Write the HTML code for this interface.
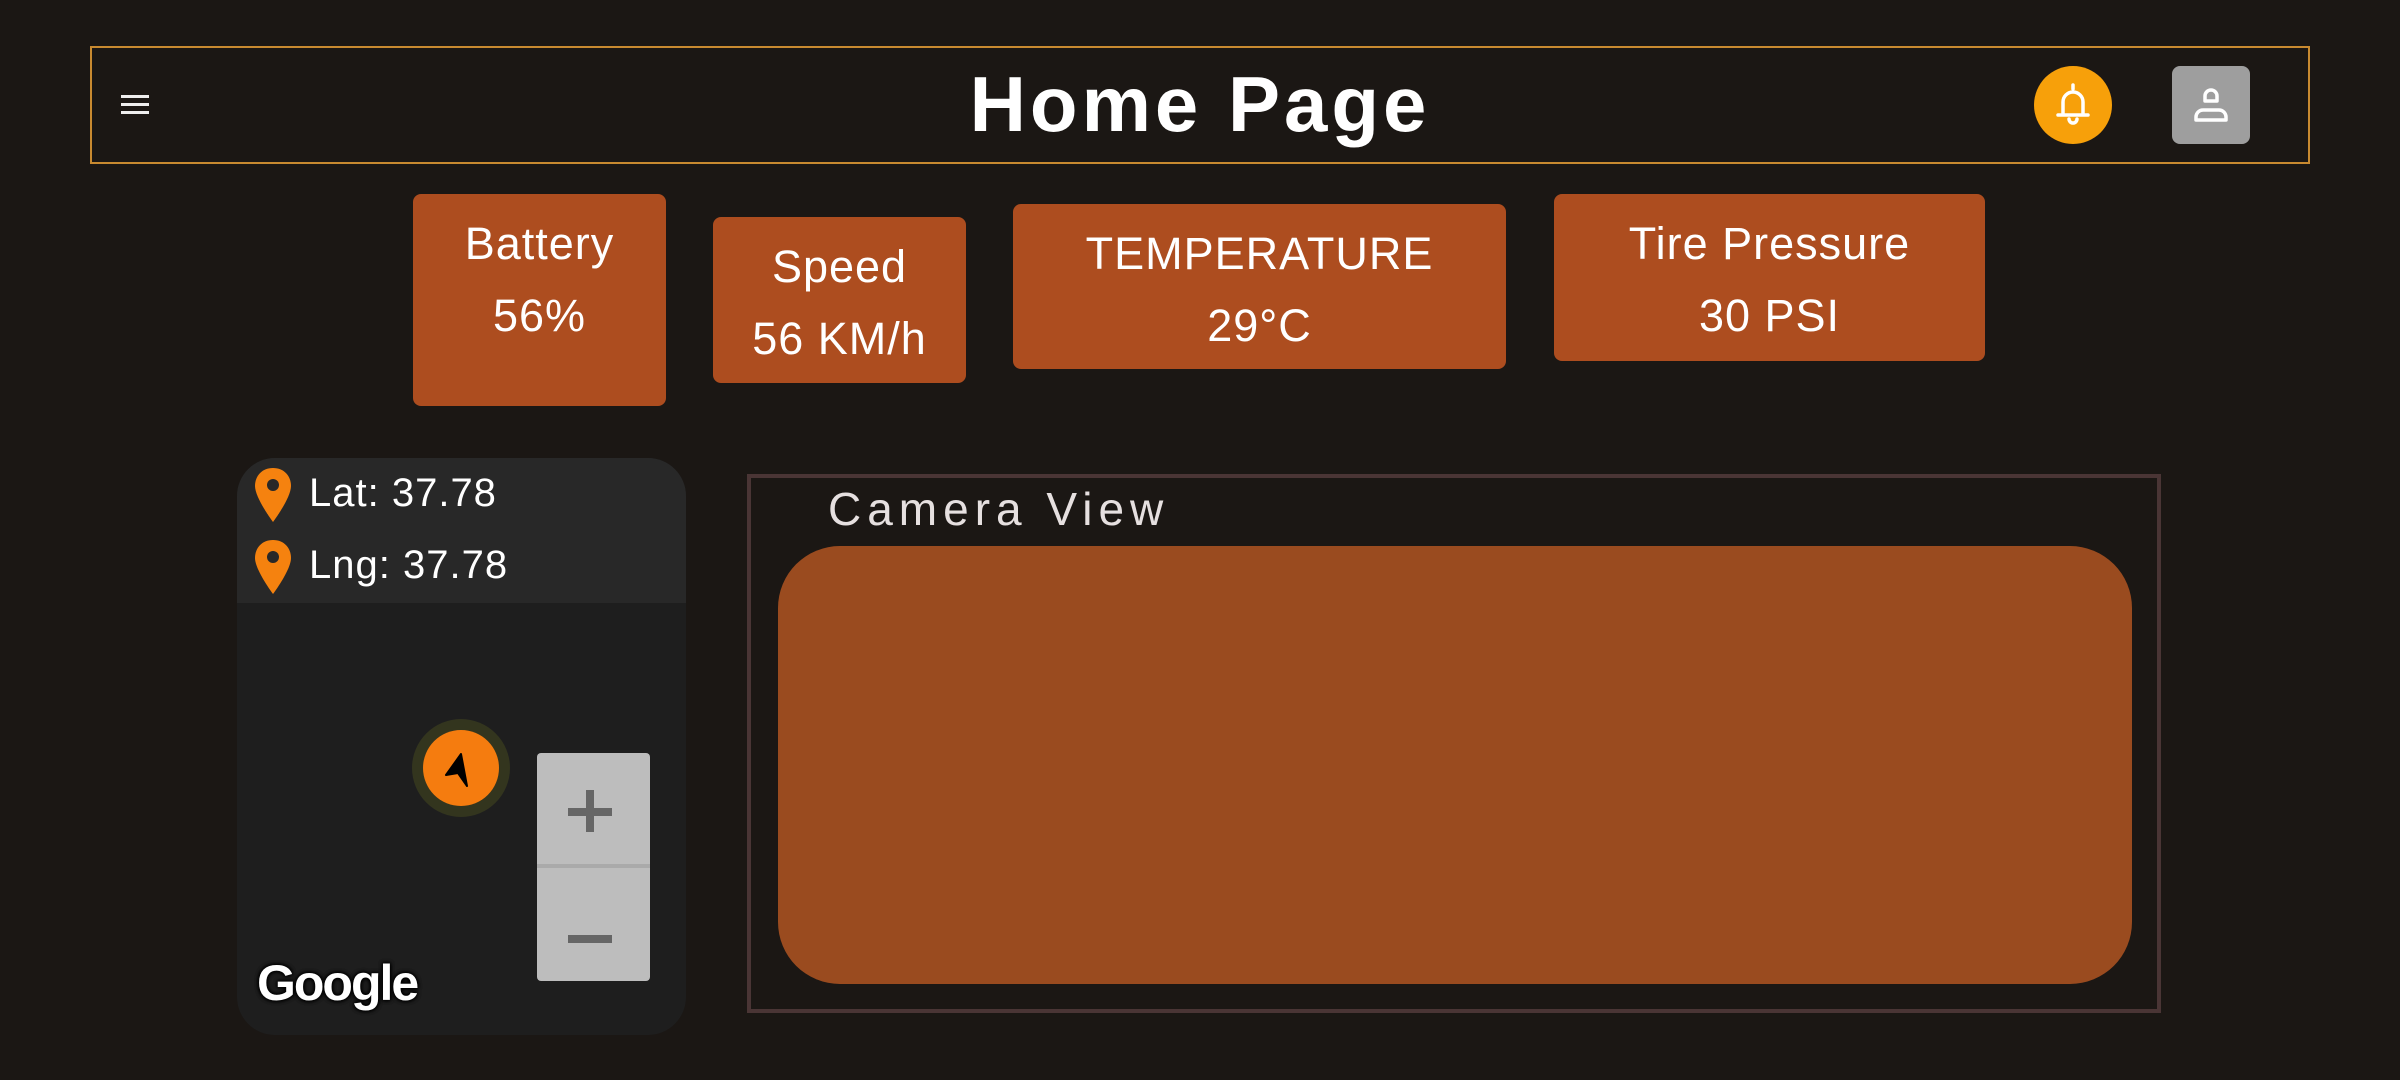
<!DOCTYPE html>
<html><head><meta charset="utf-8"><style>
*{margin:0;padding:0;box-sizing:border-box}
body{width:2400px;height:1080px;background:#1b1714;position:relative;overflow:hidden;font-family:"Liberation Sans",sans-serif;color:#fff}
.abs{position:absolute}
.hdr{left:90px;top:46px;width:2220px;height:118px;border:2px solid #c88a30}
.title{left:0;width:2400px;top:58px;text-align:center;font-weight:bold;font-size:78px;line-height:92px;letter-spacing:4px}
.card{background:#ad4d1f;border-radius:8px;text-align:center;font-size:45px;line-height:72px;padding-top:14px;letter-spacing:1px}
.map{left:237px;top:458px;width:449px;height:577px;border-radius:38px;background:#1e1e1e;overflow:hidden}
.maphead{left:0;top:0;width:449px;height:145px;background:#282828}
.ll{font-size:40px;left:72px;letter-spacing:1px}
.cam{left:747px;top:474px;width:1414px;height:539px;border:4px solid #4a3535}
</style></head><body>
<div class="abs hdr"></div>
<div class="abs" style="left:121px;top:95px;width:28px;height:3px;background:#eee"></div>
<div class="abs" style="left:121px;top:103px;width:28px;height:3px;background:#eee"></div>
<div class="abs" style="left:121px;top:111px;width:28px;height:3px;background:#eee"></div>
<div class="abs title">Home Page</div>
<div class="abs" style="left:2034px;top:66px;width:78px;height:78px;border-radius:50%;background:#f7a00a"></div>
<svg class="abs" style="left:2053px;top:82px" width="40" height="46" viewBox="0 0 40 46"><path d="M20 3v4M10 32V20a10 10 0 0 1 20 0v12M5 33h30M16 37a4 4 0 0 0 8 0" fill="none" stroke="#fff" stroke-width="3.5" stroke-linecap="round"/></svg>
<div class="abs" style="left:2172px;top:66px;width:78px;height:78px;border-radius:8px;background:#9e9e9e"></div>
<svg class="abs" style="left:2191px;top:85px" width="40" height="40" viewBox="0 0 40 40"><path d="M14 16v-5a6 6 0 0 1 12 0v5zM5 35v-3a7 7 0 0 1 7-7h16a7 7 0 0 1 7 7v3z" fill="none" stroke="#fff" stroke-width="3.5" stroke-linejoin="round"/></svg>

<div class="abs card" style="left:413px;top:194px;width:253px;height:212px">Battery<br>56%</div>
<div class="abs card" style="left:713px;top:217px;width:253px;height:166px">Speed<br>56 KM/h</div>
<div class="abs card" style="left:1013px;top:204px;width:493px;height:165px">TEMPERATURE<br>29°C</div>
<div class="abs card" style="left:1554px;top:194px;width:431px;height:167px">Tire Pressure<br>30 PSI</div>

<div class="abs map">
 <div class="abs maphead"></div>
 <svg class="abs" style="left:14px;top:8px" width="44" height="60" viewBox="0 0 44 60"><path d="M22 2C11 2 4 10 4 20c0 12 18 36 18 36s18-24 18-36C40 10 33 2 22 2z" fill="#f5820f"/><circle cx="22" cy="19" r="6" fill="#282828"/></svg>
 <svg class="abs" style="left:14px;top:80px" width="44" height="60" viewBox="0 0 44 60"><path d="M22 2C11 2 4 10 4 20c0 12 18 36 18 36s18-24 18-36C40 10 33 2 22 2z" fill="#f5820f"/><circle cx="22" cy="19" r="6" fill="#282828"/></svg>
 <div class="abs ll" style="top:13px">Lat: 37.78</div>
 <div class="abs ll" style="top:85px">Lng: 37.78</div>
 <div class="abs" style="left:175px;top:261px;width:98px;height:98px;border-radius:50%;background:#33351e"></div>
 <div class="abs" style="left:186px;top:272px;width:76px;height:76px;border-radius:50%;background:#f57c0f"></div>
 <svg class="abs" style="left:200px;top:286px" width="48" height="48" viewBox="0 0 48 48"><path d="M24 10L9 31l12-2 9 13z" fill="#000" stroke="#000" stroke-width="2" stroke-linejoin="round"/></svg>
 <div class="abs" style="left:300px;top:295px;width:113px;height:228px;background:#bdbdbd;border-radius:4px"></div>
 <div class="abs" style="left:300px;top:406px;width:113px;height:4px;background:#aaa"></div>
 <div class="abs" style="left:331px;top:350px;width:44px;height:8px;background:#666"></div>
 <div class="abs" style="left:349px;top:332px;width:8px;height:42px;background:#666"></div>
 <div class="abs" style="left:331px;top:477px;width:44px;height:8px;background:#666"></div>
 <div class="abs" style="left:20px;top:496px;font-size:50px;font-weight:bold;letter-spacing:-2px;color:#fff;text-shadow:0 0 4px #000,0 0 4px #000,0 0 4px #000">Google</div>
</div>

<div class="abs cam"></div>
<div class="abs" style="left:828px;top:482px;font-size:46px;color:#e6e0e0;letter-spacing:6px">Camera View</div>
<div class="abs" style="left:778px;top:546px;width:1354px;height:438px;border-radius:62px;background:#9a4b1f"></div>
</body></html>
